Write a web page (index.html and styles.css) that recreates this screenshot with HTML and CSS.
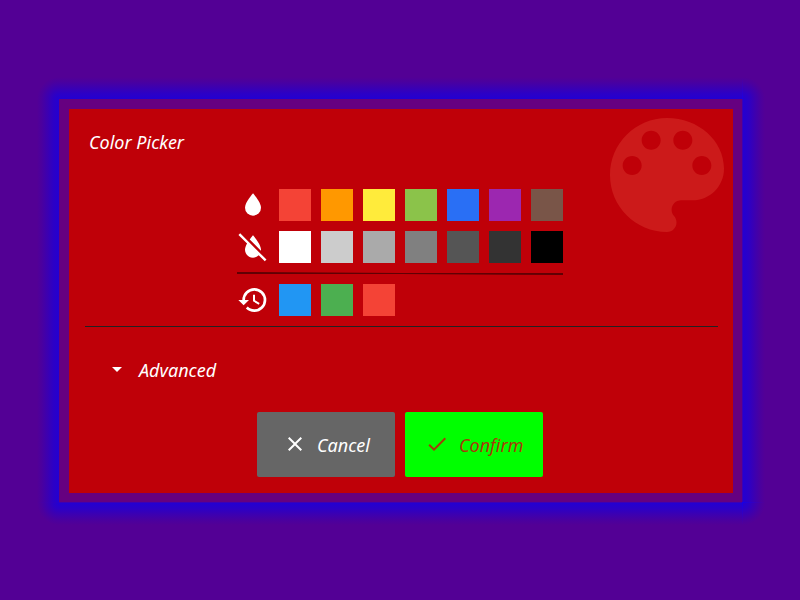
FILE: index.html
```html
<!DOCTYPE html>
<html lang="en">
<head>
<meta charset="utf-8">
<title>Color Picker</title>
<link rel="stylesheet" href="styles.css">
</head>
<body>
<main class="stage">
  <div class="glow" aria-hidden="true">
    <i class="tl"></i><i class="t"></i><i class="tr"></i>
    <i class="l"></i><i></i><i class="r"></i>
    <i class="bl"></i><i class="b"></i><i class="br"></i>
  </div>
  <section class="panel">
    <svg class="palette" viewBox="3 3 18 18"><path d="M12 3c-4.97 0-9 4.03-9 9s4.03 9 9 9c.83 0 1.5-.67 1.5-1.5 0-.39-.15-.74-.39-1.01-.23-.26-.38-.61-.38-.99 0-.83.67-1.5 1.5-1.5H16c2.76 0 5-2.24 5-5 0-4.42-4.03-8-9-8zm-5.500 9c-.83 0-1.500-.67-1.500-1.500S5.670 9 6.500 9 8 9.670 8 10.500 7.330 12 6.500 12zm3-4C8.670 8 8 7.330 8 6.500S8.670 5 9.500 5s1.500.67 1.500 1.500S10.330 8 9.500 8zm5 0c-.83 0-1.500-.67-1.500-1.500S13.670 5 14.500 5s1.500.67 1.500 1.500S15.330 8 14.500 8zm3 4c-.83 0-1.500-.67-1.500-1.500S16.670 9 17.500 9s1.500.67 1.500 1.500-.67 1.500-1.500 1.500z"/></svg>
    <h1 class="title">Color Picker</h1>
    <div class="swatches">
      <div class="row">
        <svg class="icon" viewBox="0 0 24 24"><path d="M12 20A6 6 0 0 1 6 14C6 10 12 3.250 12 3.250S18 10 18 14A6 6 0 0 1 12 20Z"/></svg>
        <b class="red"></b><b class="orange"></b><b class="yellow"></b><b class="lime"></b><b class="blue"></b><b class="purple"></b><b class="brown"></b>
      </div>
      <div class="row">
        <svg class="icon" viewBox="0 0 24 24"><path d="M20.840 22.730L16.290 18.180C15.200 19.300 13.690 20 12 20C8.690 20 6 17.310 6 14C6 12.670 6.670 11.030 7.550 9.440L1.110 3L2.390 1.730L22.110 21.460L20.840 22.730M18 14C18 10 12 3.250 12 3.250C12 3.250 10.840 4.550 9.550 6.350L17.950 14.750C18 14.500 18 14.250 18 14Z"/></svg>
        <b class="white"></b><b class="g1"></b><b class="g2"></b><b class="g3"></b><b class="g4"></b><b class="g5"></b><b class="black"></b>
      </div>
      <svg class="rule" viewBox="0 0 326 3"><path d="M0 0 163 1 326 1V3L163 2 0 2z"/></svg>
      <div class="row">
        <svg class="icon" viewBox="0 0 24 24"><path d="M13.500 8H12V13L16.280 15.540L17 14.330L13.500 12.250V8M13 3A9 9 0 0 0 4 12H1L4.960 16.030L9 12H6A7 7 0 0 1 13 5A7 7 0 0 1 20 12A7 7 0 0 1 13 19C11.070 19 9.320 18.210 8.060 16.940L6.640 18.360C8.270 20 10.500 21 13 21A9 9 0 0 0 22 12A9 9 0 0 0 13 3"/></svg>
        <b class="sky"></b><b class="green"></b><b class="red"></b>
      </div>
    </div>
    <hr class="divider">
    <div class="advanced"><svg class="caret" viewBox="0 0 10 5"><path d="M0 0h10L5 5z"/></svg><span>Advanced</span></div>
    <div class="actions">
      <div class="button cancel"><svg viewBox="0 0 24 24"><path d="M19 6.410 17.590 5 12 10.590 6.410 5 5 6.410 10.590 12 5 17.590 6.410 19 12 13.410 17.590 19 19 17.590 13.410 12z"/></svg><span>Cancel</span></div>
      <div class="button confirm"><svg viewBox="0 0 24 24"><path d="M9 16.170 4.830 12l-1.420 1.410L9 19 21 7l-1.410-1.410z"/></svg><span>Confirm</span></div>
    </div>
  </section>
  <i class="seam seam-v"></i>
  <i class="seam seam-h"></i>
</main>
</body>
</html>
```
FILE: styles.css
```css
* { box-sizing: border-box; }
body {
  margin: 0;
  background: #530095;
  color: #fff;
  font: italic 18px/24px "Noto Sans", sans-serif;
}
.stage { position: relative; width: 800px; height: 600px; padding: 99px 57px 97px 59px; overflow: hidden; }
.glow {
  position: absolute;
  inset: 77px 35px 75px 37px;
  display: grid;
  grid-template: 22px 1fr 22px / 22px 1fr 22px;
  --stops: #2300d2 0%, #2c00c6 25%, #3b00b2 50%, #4b009e 80%, #530095 100%;
}
.t { background: linear-gradient(to top, var(--stops)); }
.b { background: linear-gradient(to bottom, var(--stops)); }
.l { background: linear-gradient(to left, var(--stops)); }
.r { background: linear-gradient(to right, var(--stops)); }
.tl { background: radial-gradient(farthest-side at 100% 100%, var(--stops)); }
.tr { background: radial-gradient(farthest-side at 0 100%, var(--stops)); }
.bl { background: radial-gradient(farthest-side at 100% 0, var(--stops)); }
.br { background: radial-gradient(farthest-side at 0 0, var(--stops)); }
.seam { position: absolute; }
.seam-v {
  top: 77px; left: 742px; width: 1px; height: 448px;
  background: linear-gradient(#530095, #1a00e4 22px, #3c00b4 22px, #3c00b4 425px, #1400ea 425px, #530095);
}
.seam-h {
  top: 502px; left: 37px; width: 728px; height: 1px;
  background: linear-gradient(to right, #530095, #2300d2 22px, #3c00b4 22px, #3c00b4 705px, #1400ea 705px, #530095);
}
.panel {
  position: relative;
  height: 404px;
  border: 10px solid #660080;
  background: #bf0008;
  display: flex;
  flex-direction: column;
  padding: 21px 16px 0;
}
.palette { position: absolute; top: 9px; right: 9px; width: 114px; height: 114px; fill: #cc1a1a; }
.title { margin: 0 0 35px 4px; font-size: 18px; font-weight: 400; line-height: 24px; }
.swatches { margin-left: 152px; width: 326px; display: flex; flex-direction: column; gap: 10px; }
.row { display: flex; gap: 10px; height: 32px; }
.row b { width: 32px; height: 32px; }
.icon { width: 32px; height: 32px; fill: #fff; }
.rule { display: block; width: 326px; height: 3px; margin: -1px 0; fill: #600004; }
.red { background: #f44336; }
.orange { background: #ff9800; }
.yellow { background: #ffeb3b; }
.lime { background: #8bc34a; }
.blue { background: #296ff5; }
.purple { background: #9c27b0; }
.brown { background: #795548; }
.white { background: #fff; }
.g1 { background: #ccc; }
.g2 { background: #aaa; }
.g3 { background: #808080; }
.g4 { background: #555; }
.g5 { background: #333; }
.black { background: #000; }
.sky { background: #2196f3; }
.green { background: #4caf50; }
.divider { width: 633px; height: 1px; margin: 10px 0 0; border: 0; background: #222; }
.advanced { display: flex; align-items: center; gap: 17px; height: 24px; margin: 31px 0 0 27px; }
.caret { width: 10px; height: 5px; margin-bottom: 2px; fill: #fff; }
.actions { display: flex; gap: 10px; margin: 30px 0 0 172px; }
.button { display: flex; align-items: center; width: 138px; height: 65px; padding: 0 0 0 28px; border-radius: 2px; }
.button svg { width: 24px; height: 24px; margin: -2px 10px 0 -2px; fill: currentColor; }
.button span { margin-top: 1px; }
.button.cancel svg { width: 24px; }
.cancel { background: #666; }
.confirm { background: #0f0; color: #a63a0a; padding-left: 22px; }
.confirm svg { transform: translateY(0); }
```
